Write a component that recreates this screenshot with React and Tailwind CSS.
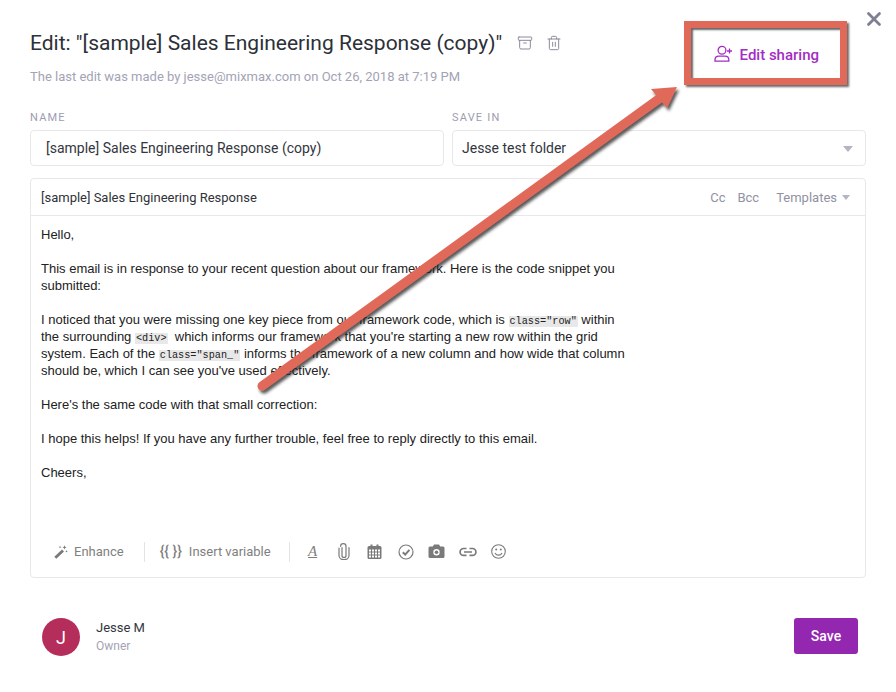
import React from "react";
import { Archive, Trash2, X } from "lucide-react";

const Code = ({ children }) => (
  <code className="bg-[#e8e8e8] px-[1px] text-[10.2px] leading-[1] [font-family:'Liberation_Mono',monospace]">{children}</code>
);

const Sep = () => <div className="w-px h-[20px] bg-[#e4e4e4]" />;

const G = "#7a7a7a";

export default function App() {
  return (
    <div className="relative w-[896px] h-[692px] bg-white overflow-hidden px-[30px] [font-family:Roboto,sans-serif]">
      <X className="absolute left-[863px] top-[8px] text-[#7f7f93]" size={22} strokeWidth={3} />
      <div className="flex justify-between pt-[27px] h-[103px]">
        <div>
          <div className="flex items-center h-[32px]">
            <h1 className="text-[21px] leading-[32px] text-[#2c3038] font-normal whitespace-nowrap">Edit: "[sample] Sales Engineering Response (copy)"</h1>
            <Archive className="ml-[15px] text-[#8b8b9c]" size={16} strokeWidth={1.5} />
            <Trash2 className="ml-[13px] text-[#8b8b9c]" size={16} strokeWidth={1.5} />
          </div>
          <p className="mt-[8px] text-[13px] leading-[20px] text-[#a3a3b5] whitespace-nowrap">The last edit was made by jesse@mixmax.com on Oct 26, 2018 at 7:19 PM</p>
        </div>
        <div className="flex items-start pr-[47px] pt-[16px] text-[#a32cc4]">
          <svg width="19" height="18" viewBox="0 0 19 18" fill="none" stroke="currentColor" strokeWidth="1.3" className="mr-[7px] mt-[2px]">
            <circle cx="8" cy="5.2" r="3.9" />
            <path d="M1 16.2v-1.4c0-2.2 1.8-3.6 3.8-3.6h6.2c2 0 3.8 1.4 3.8 3.6v1.4z" />
            <path d="M15.500 3.500v5M13 6h5" />
          </svg>
          <span className="text-[15px] leading-[24px] font-medium whitespace-nowrap">Edit sharing</span>
        </div>
      </div>

      <div className="flex gap-[8px] w-[836px]">
        <div className="w-[414px]">
          <label className="block h-[27px] pt-[8px] text-[11px] leading-[13px] tracking-[1.2px] text-[#9d9daf]">NAME</label>
          <div className="h-[36px] border border-[#e8e8ec] rounded-[4px] pl-[15px] pt-[1px] flex items-center text-[14px] text-[#33363d]">[sample] Sales Engineering Response (copy)</div>
        </div>
        <div className="flex-1">
          <label className="block h-[27px] pt-[8px] text-[11px] leading-[13px] tracking-[1.2px] text-[#9d9daf]">SAVE IN</label>
          <div className="h-[36px] border border-[#e8e8ec] rounded-[4px] pl-[9px] pr-[12px] pt-[1px] flex items-center justify-between text-[14px] text-[#33363d]">
            <span>Jesse test folder</span>
            <span className="w-0 h-0 border-x-[5px] border-x-transparent border-t-[6px] border-t-[#b4b4c2]" />
          </div>
        </div>
      </div>

      <div className="mt-[12px] w-[836px] h-[400px] border border-[#e8e8ec] rounded-[4px] flex flex-col">
        <div className="h-[37px] shrink-0 border-b border-[#e8e8ec] pl-[10px] pr-[15px] pt-[1px] flex items-center justify-between">
          <span className="text-[13px] text-[#2f3238]">[sample] Sales Engineering Response</span>
          <div className="flex items-center text-[13px] text-[#9191a3]">
            <span>Cc</span>
            <span className="ml-[12px]">Bcc</span>
            <span className="ml-[17px]">Templates</span>
            <span className="ml-[5px] w-0 h-0 border-x-[4px] border-x-transparent border-t-[5px] border-t-[#b4b4c2]" />
          </div>
        </div>
        <div className="pl-[10px] pt-[10px] flex-1 text-[13px] leading-[17px] text-[#222] [font-family:'Liberation_Sans',Arial,sans-serif] whitespace-nowrap">
          <p>Hello,</p>
          <p className="mt-[17px]">This email is in response to your recent question about our framework. Here is the code snippet you<br />submitted:</p>
          <p className="mt-[17px]">I noticed that you were missing one key piece from our framework code, which is <Code>class="row"</Code> within<br />
            the surrounding <Code>&lt;div&gt;</Code>&nbsp; which informs our framework that you're starting a new row within the grid<br />
            system. Each of the <Code>class="span_"</Code> informs the framework of a new column and how wide that column<br />
            should be, which I can see you've used effectively.</p>
          <p className="mt-[17px]">Here's the same code with that small correction:</p>
          <p className="mt-[17px]">I hope this helps! If you have any further trouble, feel free to reply directly to this email.</p>
          <p className="mt-[17px]">Cheers,</p>
        </div>
        <div className="h-[51px] shrink-0 pl-[23px] flex items-center text-[13px] text-[#7f7f7f]">
          <svg width="14" height="14" viewBox="0 0 14 14" fill={G}>
            <path d="M0.300 11.700 8 4.500l2 2-7.700 7.200z" />
            <path d="M10.500 0.300l.6 1.500 1.500.6-1.500.6-.6 1.500-.6-1.500-1.500-.6 1.500-.6zM12.500 5l.4.9.9.4-.9.4-.4.9-.4-.9-.9-.4.9-.4zM6 .8l.4.9.9.4-.9.4-.4.9-.4-.9-.9-.4.9-.4z" />
          </svg>
          <span className="ml-[6px]">Enhance</span>
          <div className="ml-[20px]"><Sep /></div>
          <span className="ml-[15px] text-[14px] font-medium whitespace-nowrap">{"{{ }}"}</span>
          <span className="ml-[7px] whitespace-nowrap">Insert variable</span>
          <div className="ml-[18px]"><Sep /></div>
          <span className="ml-[17px] w-[12px] text-center text-[15px] leading-[15px] italic underline [font-family:'Liberation_Serif',serif]">A</span>
          <svg className="ml-[19px]" width="12" height="17" viewBox="0 0 12 17" fill="none" stroke={G} strokeWidth="1.2" strokeLinecap="round">
            <path d="M4 4.500v8a2 2 0 0 0 4 0V3.500a2.700 2.700 0 0 0-5.400-0.200M1 5v7.500a5 4.200 0 0 0 10 0V4.500" />
          </svg>
          <svg className="ml-[17px]" width="15" height="15" viewBox="0 0 15 15" fill={G}>
            <path d="M2 2h1.500V0.500h2V2h4V0.500h2V2H13a1.500 1.500 0 0 1 1.500 1.500V13.500A1.500 1.500 0 0 1 13 15H2A1.500 1.500 0 0 1 .5 13.500V3.500A1.500 1.500 0 0 1 2 2z" />
            <path fill="#fff" d="M2 5.500h2v2H2zM5 5.500h2v2H5zM8 5.500h2v2H8zM11 5.500h2v2h-2zM2 8.500h2v2H2zM5 8.500h2v2H5zM8 8.500h2v2H8zM11 8.500h2v2h-2zM2 11.500h2v2H2zM5 11.500h2v2H5zM8 11.500h2v2H8zM11 11.500h2v2h-2z" />
          </svg>
          <svg className="ml-[16px]" width="16" height="16" viewBox="0 0 16 16" fill="none" stroke={G}>
            <circle cx="8" cy="8" r="7" strokeWidth="1.200" />
            <path d="M4.800 8.200 7.200 10.600 11.400 5.800" strokeWidth="2" />
          </svg>
          <svg className="ml-[14px]" width="17" height="15" viewBox="0 0 17 15" fill={G}>
            <path fillRule="evenodd" d="M2 2.500h2.800L6 .5h5l1.200 2H15A1.500 1.500 0 0 1 16.500 4v8.500A1.500 1.500 0 0 1 15 14H2A1.500 1.500 0 0 1 .5 12.500V4A1.500 1.500 0 0 1 2 2.500zM8.500 5a3.200 3.200 0 1 0 0 6.400a3.200 3.200 0 0 0 0-6.400z" />
            <circle cx="8.500" cy="8.200" r="1.800" />
          </svg>
          <svg className="ml-[14px]" width="18" height="10" viewBox="0 0 18 10" fill="none" stroke={G} strokeWidth="1.700">
            <path d="M7.500 1.500H4.500a3.200 3.200 0 0 0 0 6.800h3M10.500 1.500h3a3.200 3.200 0 0 1 0 6.800h-3M5 5h8" />
          </svg>
          <svg className="ml-[14px]" width="15" height="15" viewBox="0 0 15 15" fill="none" stroke={G} strokeWidth="1.100">
            <circle cx="7.500" cy="7.500" r="6.800" />
            <path d="M4 9c.8 1.500 2 2.200 3.500 2.200S10.200 10.500 11 9" strokeWidth="1.200" />
            <circle cx="5.200" cy="5.500" r="1" fill={G} stroke="none" />
            <circle cx="9.800" cy="5.500" r="1" fill={G} stroke="none" />
          </svg>
        </div>
      </div>

      <div className="mt-[40px] w-[836px] pl-[12px] pr-[8px] flex justify-between items-start">
        <div className="flex">
          <div className="w-[38px] h-[38px] rounded-full bg-[#b52d5a] text-white text-[18px] flex items-center justify-center">J</div>
          <div className="ml-[16px] pt-[1px]">
            <div className="text-[13px] leading-[18px] text-[#33363d]">Jesse M</div>
            <div className="text-[12px] leading-[18px] text-[#a3a3b5]">Owner</div>
          </div>
        </div>
        <button className="w-[64px] h-[36px] rounded-[3px] bg-[#9327b0] text-white text-[14px] font-medium">Save</button>
      </div>

      <div className="absolute left-[684px] top-[21px] w-[163px] h-[64px] border-[7px] border-[#e0695a] shadow-[2px_2px_2px_rgba(40,40,40,0.7),inset_2px_2px_2px_rgba(40,40,40,0.7)]" />
      <svg className="absolute left-0 top-0 pointer-events-none" width="896" height="692" viewBox="0 0 896 692">
        <defs>
          <filter id="s" x="-10%" y="-10%" width="120%" height="120%">
            <feDropShadow dx="2" dy="3" stdDeviation="1.5" floodColor="#222" floodOpacity="0.75" />
          </filter>
        </defs>
        <g filter="url(#s)">
          <line x1="262" y1="386" x2="660" y2="98" stroke="#e0695a" strokeWidth="9" strokeLinecap="round" />
          <polygon points="677,87 651,89 667,108" fill="#e0695a" />
        </g>
      </svg>
    </div>
  );
}
